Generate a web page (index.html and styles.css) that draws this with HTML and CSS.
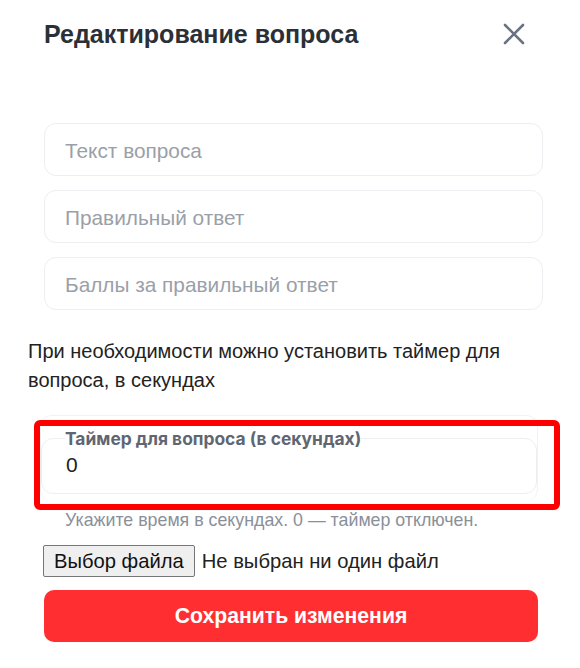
FILE: index.html
```html
<!DOCTYPE html>
<html lang="ru">
<head>
<meta charset="utf-8">
<title>Редактирование вопроса</title>
<link rel="stylesheet" href="styles.css">
</head>
<body>
<div class="modal">
  <header class="head">
    <h2 class="title">Редактирование вопроса</h2>
    <button class="close" aria-label="Закрыть">
      <svg width="22" height="22" viewBox="0 0 22 22"><path d="M2 2L20 20M20 2L2 20" stroke="#6b7280" stroke-width="2.6" stroke-linecap="round" fill="none"/></svg>
    </button>
  </header>
  <div class="fields">
    <input class="field" type="text" placeholder="Текст вопроса">
    <input class="field" type="text" placeholder="Правильный ответ">
    <input class="field" type="text" placeholder="Баллы за правильный ответ">
  </div>
  <p class="hint">При необходимости можно установить таймер для вопроса, в секундах</p>
  <div class="timer-wrap">
    <fieldset class="timer">
      <legend class="timer-label">Таймер для вопроса (в секундах)</legend>
      <div class="timer-value">0</div>
    </fieldset>
    <div class="annot"></div>
  </div>
  <p class="helper">Укажите время в секундах. 0 — таймер отключен.</p>
  <div class="file">
    <span class="file-btn">Выбор файла</span>
    <span class="file-name">Не выбран ни один файл</span>
  </div>
  <button class="save">Сохранить изменения</button>
</div>
</body>
</html>
```
FILE: styles.css
```css
html, body {
  margin: 0;
  padding: 0;
  background: #fff;
}
body {
  font-family: "Liberation Sans", Arial, sans-serif;
  color: #222;
  width: 580px;
  height: 668px;
  overflow: hidden;
}
.modal {
  padding: 20px 37px 0 44px;
  display: flex;
  flex-direction: column;
}
.head {
  display: flex;
  justify-content: space-between;
  align-items: center;
  padding-right: 18px;
  height: 28px;
}
.title {
  margin: 0;
  font-size: 25px;
  font-weight: 700;
  color: #2b3038;
}
.close {
  border: 0;
  background: none;
  padding: 0;
  width: 22px;
  height: 22px;
  display: flex;
}
.fields {
  margin-top: 75px;
  display: flex;
  flex-direction: column;
  gap: 14px;
}
.field {
  box-sizing: border-box;
  height: 53px;
  width: 499px;
  border: 1px solid #eceef1;
  border-radius: 12px;
  padding: 3px 20px 0;
  font-family: inherit;
  font-size: 20.8px;
  color: #222;
  outline: none;
  background: #fff;
}
.field::placeholder {
  color: #9aa0a9;
}
.hint {
  margin: 27px 0 0 -16px;
  font-size: 20px;
  line-height: 29px;
  color: #222;
  width: 500px;
}
.timer-wrap {
  position: relative;
  margin: 20px 0 0 -4px;
  width: 498px;
  height: 86px;
  border-radius: 12px;
  border: 1px solid #f1f2f4;
  border-bottom: 0;
  box-sizing: border-box;
}
.timer {
  margin: 12px 0 0 0;
  padding: 0 0 0 24px;
  height: 66px;
  box-sizing: border-box;
  border: 1px solid #eceef1;
  border-radius: 12px;
}
.timer-label {
  padding: 0;
  margin-left: -1px;
  font-family: Inter, "Liberation Sans", sans-serif;
  font-size: 17.4px;
  font-weight: 700;
  color: #5f6672;
}
.timer-value {
  font-size: 21px;
  margin-top: 4px;
  color: #222;
}
.annot {
  position: absolute;
  left: -7px;
  top: 4px;
  width: 526px;
  height: 90px;
  box-sizing: border-box;
  border: 6px solid #ff0000;
  border-radius: 6px;
}
.helper {
  margin: 9px 0 0 21px;
  font-size: 17.8px;
  color: #8a909a;
}
.file {
  margin: 14px 0 0 -1px;
  display: flex;
  align-items: center;
  gap: 7px;
  font-size: 20.2px;
}
.file-btn {
  box-sizing: border-box;
  height: 32px;
  padding: 0 10px;
  display: flex;
  align-items: center;
  background: #efefef;
  border: 1px solid #767676;
  border-radius: 2px;
  color: #111;
}
.file-name {
  color: #222;
}
.save {
  margin-top: 13px;
  width: 494px;
  height: 52px;
  border: 0;
  border-radius: 10px;
  background: #ff2f31;
  color: #fff;
  font-family: inherit;
  font-size: 21.2px;
  font-weight: 700;
}
```
